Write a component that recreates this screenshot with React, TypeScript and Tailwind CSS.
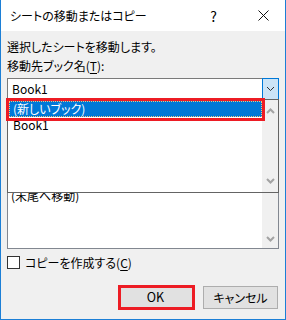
import React from "react";

const font = {
  fontFamily: '"Noto Sans CJK JP", "Noto Sans", sans-serif',
};

function Chevron({ up = false, color = "#333", sw = 1 }: { up?: boolean; color?: string; sw?: number }) {
  return (
    <svg width="9" height="6" viewBox="0 0 9 6">
      <path
        d={up ? "M1 5 L4.5 1.5 L8 5" : "M1 1 L4.5 4.5 L8 1"}
        fill="none"
        stroke={color}
        strokeWidth={sw}
      />
    </svg>
  );
}

export default function App() {
  return (
    <div
      className="relative w-[286px] h-[320px] bg-[#f0f0f0] border-x border-b border-[#1c7fd6] text-[12px] text-black [font-feature-settings:'palt'] leading-none flex flex-col"
      style={font}
    >
      {/* title bar */}
      <div className="h-[31px] bg-white flex items-center shrink-0">
        <span className="ml-[9px] text-[12px]">シートの移動またはコピー</span>
        <span className="ml-auto mr-[41px] text-[14px]">?</span>
        <svg className="mr-[16px]" width="11" height="11" viewBox="0 0 11 11">
          <path d="M0.5 0.5 L10.5 10.5 M10.5 0.5 L0.5 10.5" stroke="#111" strokeWidth="1" />
        </svg>
      </div>

      {/* body */}
      <div className="flex flex-col px-[6px] pt-[8px]">
        <div className="h-[16px] flex items-center">選択したシートを移動します。</div>
        <div className="h-[16px] flex items-center mt-[3px]">
          移動先ブック名(<span className="underline underline-offset-2">T</span>):
        </div>
        {/* combo */}
        <div className="mt-[4px] h-[22px] w-[272px] bg-white border border-[#7a7a7a] flex items-stretch">
          <div className="flex-1 flex items-center pl-[4px] text-[12px]">Book1</div>
          <div className="w-[17px] -my-px -mr-px bg-[#cce4f7] border border-[#0078d7] flex items-center justify-center">
            <Chevron color="#333" />
          </div>
        </div>
        {/* underlying listbox (mostly hidden under the open dropdown) */}
        <div className="mt-[7px] h-[142px] w-[272px] bg-white border border-[#828790] flex">
          <div className="flex-1 flex flex-col pt-[80px]">
            <div className="h-[16px] flex items-center pl-[3px]">(末尾へ移動)</div>
          </div>
          <div className="w-[16px] bg-[#f0f0f0] flex flex-col justify-end items-center pb-[6px]">
            <Chevron color="#a3a3a3" sw={2} />
          </div>
        </div>
        {/* checkbox */}
        <div className="mt-[6px] h-[15px] flex items-center">
          <div className="w-[13px] h-[13px] border border-[#333] bg-white" />
          <span className="ml-[5px]">
            コピーを作成する(<span className="underline underline-offset-2">C</span>)
          </span>
        </div>
        {/* buttons */}
        <div className="mt-[16px] flex justify-end gap-[10px] pr-[1px]">
          <div className="w-[75px] h-[23px] bg-[#e1e1e1] border border-[#adadad] flex items-center justify-center text-[12.5px]">
            OK
          </div>
          <div className="w-[75px] h-[23px] bg-[#e1e1e1] border border-[#adadad] flex items-center justify-center">
            キャンセル
          </div>
        </div>
      </div>

      {/* dropdown popup */}
      <div className="absolute left-[6px] top-[99px] w-[272px] h-[94px] bg-white border border-[#646464] flex">
        <div className="flex-1 flex flex-col pt-[1px] pl-[1px]">
          <div className="h-[16px] bg-[#0078d7] text-white flex items-center pl-[3px] border border-dotted border-[#f3c47e]">
            (新しいブック)
          </div>
          <div className="h-[16px] flex items-center pl-[4px]">Book1</div>
        </div>
        <div className="w-[16px] bg-[#f0f0f0] flex flex-col justify-between items-center py-[8px]">
          <Chevron up color="#a3a3a3" sw={2} />
          <Chevron color="#a3a3a3" sw={2} />
        </div>
      </div>

      {/* red highlight boxes */}
      <div className="absolute left-[5px] top-[98px] w-[259px] h-[23px] border-[3px] border-[#ed1c24]" />
      <div className="absolute left-[117px] top-[285px] w-[77px] h-[25px] border-[3px] border-[#ed1c24]" />
    </div>
  );
}
